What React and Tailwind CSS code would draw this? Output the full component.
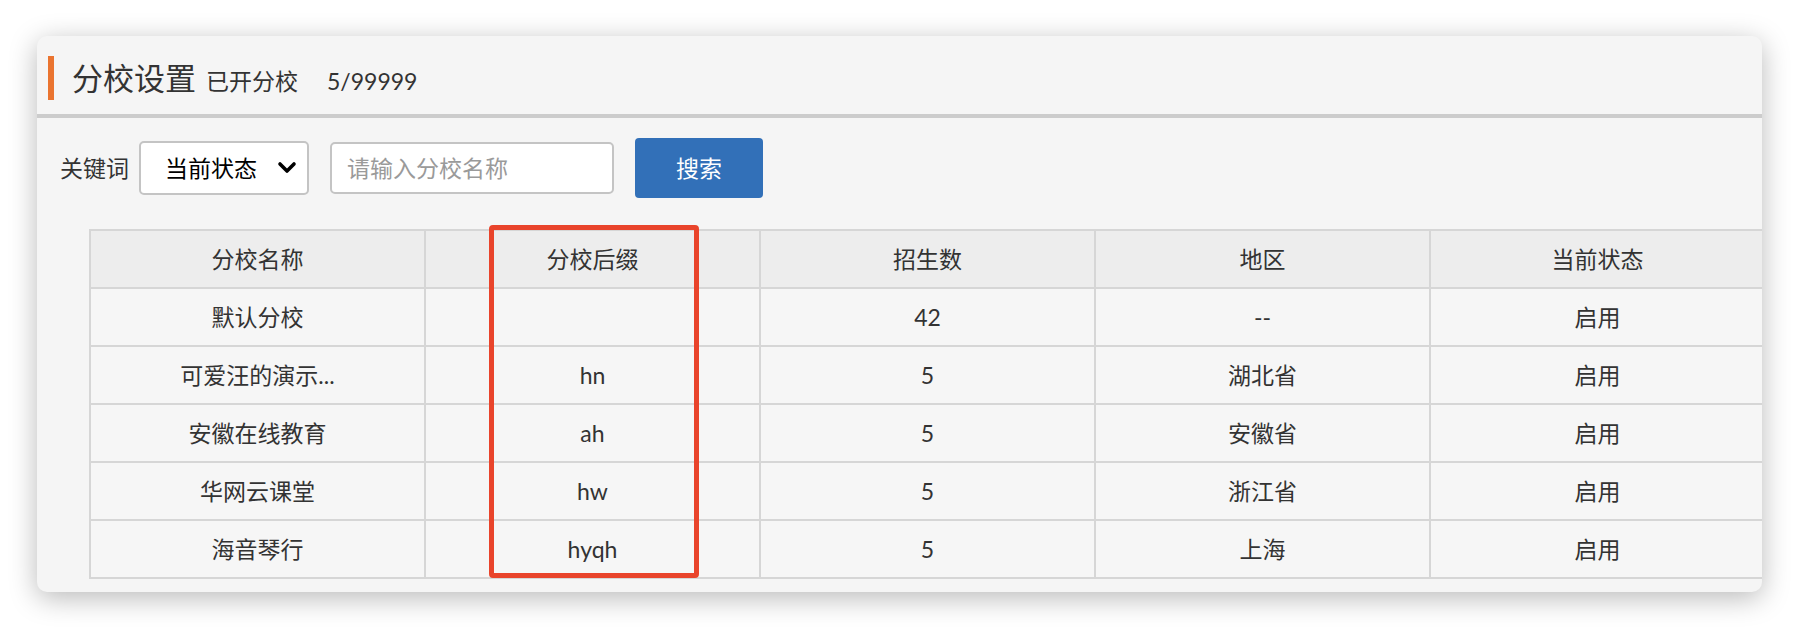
import React from "react";

const rows = [
  ["默认分校", "", "42", "--", "启用"],
  ["可爱汪的演示...", "hn", "5", "湖北省", "启用"],
  ["安徽在线教育", "ah", "5", "安徽省", "启用"],
  ["华网云课堂", "hw", "5", "浙江省", "启用"],
  ["海音琴行", "hyqh", "5", "上海", "启用"],
];

const headers = ["分校名称", "分校后缀", "招生数", "地区", "当前状态"];

export default function App() {
  return (
    <div
      className="w-[1798px] h-[628px] bg-white pt-[36px] pl-[37px]"
      style={{ fontFamily: '"Lato", "Noto Sans CJK SC", sans-serif' }}
    >
      <div className="w-[1725px] h-[556px] bg-[#f5f5f5] rounded-[10px] overflow-hidden shadow-[0_6px_28px_rgba(0,0,0,0.28)]">
        {/* Header */}
        <div className="h-[82px] pt-[6px] pl-[11px] flex items-center border-b-4 border-[#cccccc]">
          <div className="w-[6px] h-[44px] bg-[#ea7430]" />
          <div className="ml-[18px] flex items-baseline text-[#333]">
            <span className="text-[31px] leading-none">分校设置</span>
            <span className="ml-[10px] text-[23px] leading-none">已开分校</span>
            <span className="ml-[29px] text-[23px] leading-none">5/99999</span>
          </div>
        </div>

        {/* Filter row */}
        <div className="mt-[20px] h-[60px] pl-[23px] flex items-center text-[23px]">
          <span className="text-[#333] leading-none">关键词</span>
          <div className="ml-[10px] w-[170px] h-[54px] bg-white border-2 border-[#c4c4c4] rounded-[5px] flex items-center pl-[24px] pr-[8px] justify-between">
            <span className="text-black leading-none">当前状态</span>
            <svg width="20" height="14" viewBox="0 0 20 14" className="mr-[2px]">
              <path d="M3 3 L10 10 L17 3" fill="none" stroke="#000" strokeWidth="3.6" strokeLinecap="round" strokeLinejoin="round" />
            </svg>
          </div>
          <div className="ml-[21px] w-[284px] h-[52px] bg-white border-2 border-[#c4c4c4] rounded-[5px] flex items-center pl-[15px]">
            <span className="text-[#9a9a9a] leading-none">请输入分校名称</span>
          </div>
          <div className="ml-[21px] w-[128px] h-[60px] bg-[#3270b8] rounded-[4px] flex items-center justify-center">
            <span className="text-white leading-none">搜索</span>
          </div>
        </div>

        {/* Table */}
        <div className="relative mt-[31px] ml-[52px] w-[1676px]">
          <table className="table-fixed border-collapse w-[1676px] text-[23px] text-[#333]">
            <thead>
              <tr className="h-[58px] bg-[#ededed]">
                {headers.map((h) => (
                  <th key={h} className="w-[335px] font-normal border-2 border-[#d6d6d6] text-center align-middle">
                    {h}
                  </th>
                ))}
              </tr>
            </thead>
            <tbody>
              {rows.map((r, i) => (
                <tr key={i} className="h-[58px] bg-[#f6f6f6]">
                  {r.map((c, j) => (
                    <td key={j} className="border-2 border-[#d6d6d6] text-center align-middle">
                      {c}
                    </td>
                  ))}
                </tr>
              ))}
            </tbody>
          </table>
          <div className="absolute left-[400px] top-[-4px] w-[210px] h-[353px] border-[5px] border-[#e9442b] rounded-[4px] pointer-events-none" />
        </div>
      </div>
    </div>
  );
}
